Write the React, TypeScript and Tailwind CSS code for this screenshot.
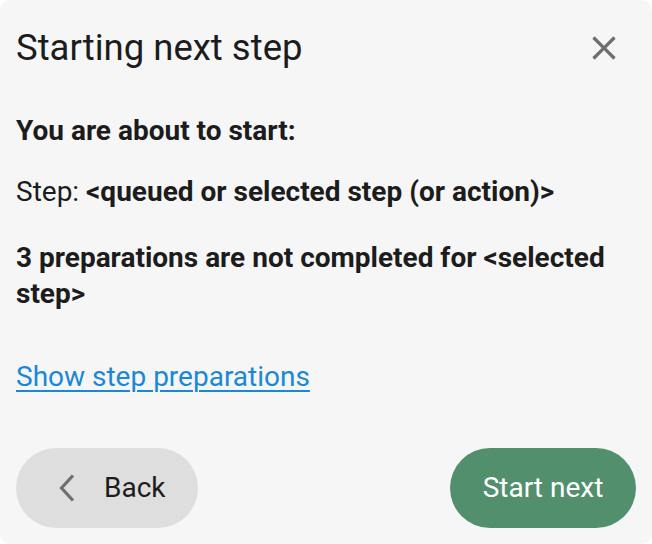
import React from "react";

export default function App() {
  return (
    <div className="w-[652px] h-[544px] bg-white" style={{ fontFamily: "Roboto, 'Liberation Sans', sans-serif" }}>
      <div className="w-full h-full bg-[#f6f6f6] rounded-[10px] flex flex-col px-4 pt-[28px] pb-4">
        <div className="flex items-center justify-between h-[40px]">
          <h1 className="text-[36.5px] leading-[40px] text-[#1c1c1c] font-normal">Starting next step</h1>
          <button className="w-[40px] h-[40px] flex items-center justify-center mr-[12px]">
            <svg width="40" height="40" viewBox="0 0 24 24" fill="#6f6f6f">
              <path d="M19 6.41L17.59 5 12 10.59 6.41 5 5 6.41 10.59 12 5 17.59 6.41 19 12 13.41 17.59 19 19 17.59 13.41 12z" />
            </svg>
          </button>
        </div>
        <div className="mt-[45px] text-[28px] leading-[36px] font-bold text-[#1c1c1c]">You are about to start:</div>
        <div className="mt-[25px] text-[28px] leading-[36px] text-[#1c1c1c]">
          Step: <span className="font-bold">&lt;queued or selected step (or action)&gt;</span>
        </div>
        <div className="mt-[30px] text-[28px] leading-[36px] font-bold text-[#1c1c1c]">
          3 preparations are not completed for &lt;selected step&gt;
        </div>
        <div className="mt-[47px] text-[28px] leading-[36px]">
          <a className="text-[#1a88d8] underline underline-offset-[4px] decoration-[2px]">Show step preparations</a>
        </div>
        <div className="mt-auto flex justify-between">
          <button className="h-[80px] w-[182px] rounded-full bg-[#dedede] flex items-center pl-[43px] gap-[29px]">
            <svg width="16" height="28" viewBox="0 0 16 28" fill="none">
              <path d="M14 1.5L2.5 14L14 26.5" stroke="#6f6f6f" strokeWidth="3.2" />
            </svg>
            <span className="text-[28px] text-[#1c1c1c]">Back</span>
          </button>
          <button className="h-[80px] w-[186px] rounded-full bg-[#528f6d] flex items-center justify-center">
            <span className="text-[28px] text-white">Start next</span>
          </button>
        </div>
      </div>
    </div>
  );
}
